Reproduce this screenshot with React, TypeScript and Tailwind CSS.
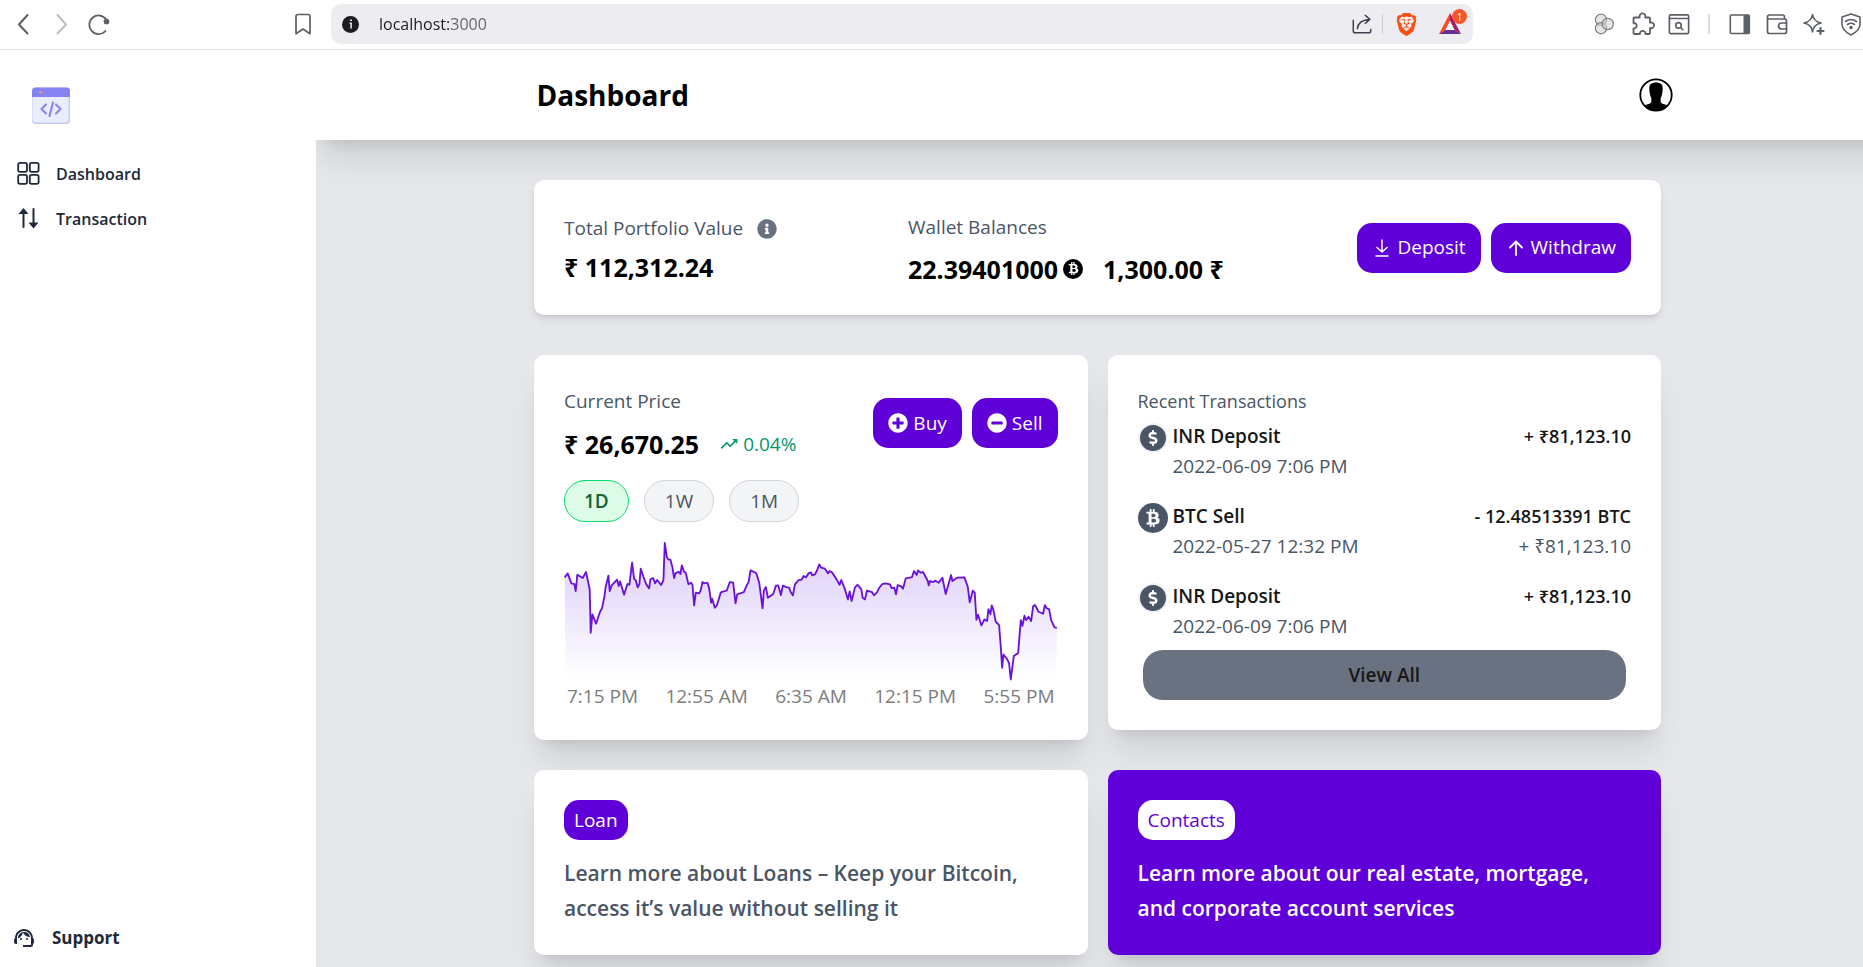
import React, { type ReactNode } from "react";
import { FaBtc, FaDollarSign, FaInfoCircle, FaMinusCircle, FaPlusCircle } from "react-icons/fa";
import { MdSupportAgent, MdTrendingUp } from "react-icons/md";
import { SiBrave } from "react-icons/si";

const CARD = "rounded-[10px] p-[30px]";
const SHADOW_XL = "shadow-[0_25px_31px_-6px_rgb(0_0_0/0.1),0_10px_12px_-8px_rgb(0_0_0/0.1)]";
const SHADOW_MD = "shadow-[0_5px_8px_-1px_rgb(0_0_0/0.1),0_3px_5px_-3px_rgb(0_0_0/0.1)]";
const PURPLE_BUTTON =
  "flex h-[50px] items-center rounded-[15px] bg-[#5f00d9] px-[15px] text-[19px] text-white";

function Stroke({ size, box = 24, width = 2, children }: { size: string; box?: number; width?: number; children: ReactNode }) {
  return (
    <svg
      className={size}
      viewBox={`0 0 ${box} ${box}`}
      fill="none"
      stroke="currentColor"
      strokeWidth={width}
      strokeLinecap="round"
      strokeLinejoin="round"
      aria-hidden="true"
    >
      {children}
    </svg>
  );
}

function BrowserBar() {
  return (
    <div className="flex h-[50px] shrink-0 items-center border-b border-[#e2e2e4] bg-white pb-px text-[#5b5f66]">
      <div className="flex w-[331px] shrink-0 items-center pl-3">
        <button aria-label="Back" className="mr-[14px]">
          <Stroke size="size-6"><path d="M15.500 3 7 12.500 15.500 21.500" /></Stroke>
        </button>
        <button aria-label="Forward" className="mr-[12px] text-[#bcbec1]">
          <Stroke size="size-6"><path d="M7.500 3 16 12.500 7.500 21.500" /></Stroke>
        </button>
        <button aria-label="Reload" className="mr-auto">
          <Stroke size="size-6" width={1.7}>
            <path d="M19.500 19A9.300 9.300 0 1 1 20.300 7.500" />
            <circle cx="20.500" cy="9.500" r="2" fill="currentColor" />
          </Stroke>
        </button>
        <button aria-label="Bookmark" className="mr-4">
          <Stroke size="size-6" width={1.7}>
            <path d="M5 4.500a2 2 0 0 1 2-2h10a2 2 0 0 1 2 2v17.200l-7-4.700-7 4.700z" />
          </Stroke>
        </button>
      </div>
      <div className="flex h-10 flex-1 items-center rounded-[10px] bg-[#edecf1] pl-[11px] text-[#3b3e4f]">
        <svg className="size-[17px] shrink-0" viewBox="0 0 17 17" aria-hidden="true">
          <circle cx="8.500" cy="8.500" r="8.500" fill="#1b1b20" />
          <path d="M8 4.200h2M7.600 7.200h1.500v5.300" stroke="#edecf1" strokeWidth="1.500" fill="none" />
        </svg>
        <input
          aria-label="Address"
          defaultValue="localhost:3000"
          className="ml-5 min-w-0 flex-1 bg-[linear-gradient(90deg,#1b1b20_73px,#63636b_73px)] bg-clip-text font-['Open_Sans',sans-serif] text-[16px] leading-6 text-transparent caret-black outline-none"
        />
        <button aria-label="Share" className="mr-[9px]">
          <Stroke size="size-[22px]" width={1.6}>
            <path d="M2.500 8v11.500a2 2 0 0 0 2 2h15a2 2 0 0 0 2-2v-1.500M7 17c.5-6 5-9.500 13-10M15.500 2.500 20.500 7l-5 4.500" />
          </Stroke>
        </button>
        <span className="mr-[12px] h-5 w-px bg-[#c9c9d0]" />
        <button aria-label="Brave Shields" className="mr-5 text-[#fb5010]">
          <SiBrave className="size-[23px]" />
        </button>
        <button aria-label="Brave Rewards, 1 new" className="relative mr-[11px]">
          <svg className="size-6" viewBox="0 0 24 24" aria-hidden="true">
            <path d="M12 1 1 22l6.500-4L12 9z" fill="#ff4724" />
            <path d="M12 1v8l4.500 9 6.500 4z" fill="#9e1f63" />
            <path d="M1 22h22l-6.500-4h-9z" fill="#662d91" />
            <path d="m12 9 4.500 9h-9z" fill="#fff" />
          </svg>
          <span className="absolute -top-[3px] left-[14px] flex size-[15px] items-center justify-center rounded-full bg-[#fb542b] text-[10px] leading-none text-white">
            1
          </span>
        </button>
      </div>
      <div className="flex w-[390px] shrink-0 items-center justify-end gap-[13px]">
        <button aria-label="Color circles" className="mr-[3px]">
          <svg className="size-[22px]" viewBox="0 0 22 22" fill="#d4d4d4" fillOpacity="0.6" stroke="#7d8084" strokeWidth="1.200" aria-hidden="true">
            <circle cx="8" cy="6.800" r="5.600" />
            <circle cx="8" cy="15.200" r="5.600" />
            <circle cx="14.800" cy="11" r="5.600" />
          </svg>
        </button>
        <button aria-label="Extensions">
          <Stroke size="size-6" width={1.8}>
            <path d="M3.500 5.500H8.700a3 3 0 1 1 5.600 0H18a1 1 0 0 1 1 1v4.200a2.900 2.900 0 1 1 0 5.300v5a1 1 0 0 1-1 1h-3.500c.2-4.200-5.800-4.200-5.600 0H3.500a1 1 0 0 1-1-1v-4.600c4.300.2 4.300-5.600 0-5.400V6.500a1 1 0 0 1 1-1z" />
          </Stroke>
        </button>
        <button aria-label="Search tabs">
          <Stroke size="size-[22px]" width={1.8}>
            <rect x="1.500" y="2" width="21" height="20.500" rx="1.500" />
            <path d="M1.500 6h21" />
            <circle cx="11.500" cy="13.500" r="3" />
            <path d="m13.800 15.800 2.500 2.500" />
          </Stroke>
        </button>
        <span className="mx-[5px] h-5 w-[2px] bg-[#dcdde2]" />
        <button aria-label="Sidebar">
          <svg className="size-6" viewBox="0 0 24 24" aria-hidden="true">
            <rect x="2.300" y="3" width="19" height="18.500" rx="1" fill="none" stroke="currentColor" strokeWidth="1.600" />
            <path d="M15.500 3h6v18.500h-6z" fill="currentColor" />
          </svg>
        </button>
        <button aria-label="Wallet">
          <Stroke size="size-6" width={1.7}>
            <path d="M19.500 7V5a2 2 0 0 0-2-2H4.500a2 2 0 0 0-2 2v14.500a2 2 0 0 0 2 2h15a2 2 0 0 0 2-2V9a2 2 0 0 0-2-2H2.500" />
            <path d="M21.500 11h-5a3 3 0 0 0 0 6h5" />
          </Stroke>
        </button>
        <button aria-label="Leo AI">
          <Stroke size="size-6" width={1.6}>
            <path d="M10.500 2.500c.6 4.700 3 7.300 8.500 8.500-5.500 1.200-7.900 3.800-8.500 9-.6-5.200-3-7.800-8.500-9 5.500-1.200 7.900-3.800 8.500-8.500z" />
            <path d="M18.500 16v6M15.500 19h6" strokeWidth="2.200" />
          </Stroke>
        </button>
        <button aria-label="VPN">
          <Stroke size="size-6" width={1.6}>
            <path d="M12 2 21 5v7c0 5-4 8.500-9 11-5-2.500-9-6-9-11V5z" />
            <path d="M6.500 9.500c3.500-2.600 7.500-2.600 11 0M8.500 12.500c2.200-1.600 4.800-1.600 7 0" />
            <circle cx="12" cy="15.500" r="1" fill="currentColor" />
          </Stroke>
        </button>
      </div>
    </div>
  );
}

function Logo() {
  return (
    <svg className="h-[38px] w-10" viewBox="0 0 40 38" role="img" aria-label="Code window logo">
      <rect x="1" y="0.500" width="38" height="36.500" rx="3.500" fill="#c9c9f2" />
      <rect x="1.500" y="1" width="36" height="34.500" rx="3" fill="#e9edff" />
      <path d="M1 4a3.500 3.500 0 0 1 3.500-3.500h31A3.500 3.500 0 0 1 39 4v6H1z" fill="#8583f4" />
      <circle cx="6.500" cy="5.500" r="1" fill="#6aa5ff" />
      <circle cx="9.300" cy="5.500" r="1" fill="#f5b56b" />
      <circle cx="12" cy="5.500" r="1" fill="#e66fa8" />
      <path
        d="m15 17.500-4.500 4.500 4.500 4.500M25 17.500l4.500 4.500-4.500 4.500M22 15.500 18.500 29"
        fill="none"
        stroke="#8a86ee"
        strokeWidth="2.200"
        strokeLinecap="round"
        strokeLinejoin="round"
      />
    </svg>
  );
}

function Sidebar() {
  return (
    <aside className="relative z-10 flex w-[316px] shrink-0 flex-col justify-between bg-white pt-[37px] pb-[14px] text-[#1e293b]">
      <div>
        <div className="pl-[31px]"><Logo /></div>
        <nav className="mt-[26px] flex flex-col text-[16px] font-semibold">
          <a href="#dashboard" className="flex h-[45px] items-center gap-4 pl-[17px]">
            <svg className="size-[23px]" viewBox="0 0 23 23" fill="none" stroke="currentColor" strokeWidth="1.800" aria-hidden="true">
              <rect x="1.200" y="0.900" width="8.800" height="9" rx="1.800" />
              <rect x="12.800" y="0.900" width="8.800" height="9" rx="1.800" />
              <rect x="1.200" y="12.900" width="8.800" height="9" rx="1.800" />
              <rect x="12.800" y="12.900" width="8.800" height="9" rx="1.800" />
            </svg>
            Dashboard
          </a>
          <a href="#transaction" className="flex h-[45px] items-center gap-4 pl-[17px]">
            <svg className="size-[23px]" viewBox="0 0 23 23" aria-hidden="true">
              <path d="M6.500 20V5M16.500 2v15" stroke="currentColor" strokeWidth="2" strokeLinecap="round" />
              <path d="M6.500 1 11.500 7h-10zM16.500 21.500l-5-6h10z" fill="currentColor" />
            </svg>
            Transaction
          </a>
        </nav>
      </div>
      <a href="#support" className="flex h-[30px] items-center gap-4 pl-3 text-[17px] font-bold">
        <MdSupportAgent className="size-6" />
        Support
      </a>
    </aside>
  );
}

function Avatar() {
  return (
    <svg className="size-[34px]" viewBox="0 0 34 34" aria-hidden="true">
      <defs>
        <clipPath id="avatar-clip"><circle cx="17" cy="17" r="16" /></clipPath>
      </defs>
      <g clipPath="url(#avatar-clip)">
        <path d="M17 4.500c5 0 6.900 2.400 6.700 6.300-.1 3-.5 6.700-2 9.500v4c.6 1.800 4.800 1.700 8.500 4.200V34H3.800v-5.500c3.700-2.500 7.900-2.400 8.500-4.200v-4c-1.500-2.800-1.900-6.500-2-9.500C10.100 6.900 12 4.500 17 4.500z" />
      </g>
      <circle cx="17" cy="17" r="15.700" fill="none" stroke="#000" strokeWidth="1.800" />
    </svg>
  );
}

function Header() {
  return (
    <header className={`-mr-10 bg-white pr-10 ${SHADOW_XL}`}>
      <div className="mx-auto flex h-[90px] w-full max-w-[1130px] items-center justify-between px-1">
        <h1 className="text-[28px] font-bold text-black">Dashboard</h1>
        <button aria-label="Account" className="-mr-[14px]"><Avatar /></button>
      </div>
    </header>
  );
}

function PortfolioCard() {
  return (
    <section className={`${CARD} ${SHADOW_MD} grid h-[135px] grid-cols-[344px_1fr_auto] items-center bg-white`}>
      <div>
        <div className="flex h-[30px] items-center gap-[14px] text-[19px] font-medium text-gray-600">
          Total Portfolio Value
          <FaInfoCircle className="size-5 text-gray-500" />
        </div>
        <p className="mt-2 text-[25px] leading-[30px] font-bold text-black">₹ 112,312.24</p>
      </div>
      <div>
        <p className="text-[19px] leading-[30px] font-medium text-gray-600">Wallet Balances</p>
        <div className="mt-3 flex items-center text-[25px] leading-[30px] font-bold text-black">
          22.39401000
          <span className="ml-[5px] flex size-5 items-center justify-center rounded-full bg-black text-white">
            <FaBtc className="size-[13px]" />
          </span>
          <span className="ml-5">1,300.00 ₹</span>
        </div>
      </div>
      <div className="flex gap-[10px]">
        <button className={PURPLE_BUTTON}>
          <span className="mr-[5px]">
            <Stroke size="size-5" box={20} width={1.5}><path d="M10 2v12M5 9.500l5 4.500 5-4.500M4 18h12" /></Stroke>
          </span>
          Deposit
        </button>
        <button className={PURPLE_BUTTON}>
          <span className="mr-[5px]">
            <Stroke size="size-5" box={20} width={1.8}><path d="M10 17V4M4 9.500 10 3.500l6 6" /></Stroke>
          </span>
          Withdraw
        </button>
      </div>
    </section>
  );
}

const PRICE_POINTS =
  "74,172 83,160 94,190 103,192 107,213 112,164 128,174 138,156 149,208 152,338 157,283 168,311 180,275 186,264 193,230 197,200 205,167 209,213 215,196 231,179 236,198 240,184 252,224 262,192 268,194 276,128 282,176 287,181 293,202 298,192 302,146 310,170 318,192 327,205 331,178 339,174 345,190 351,180 363,195 370,180 374,69 380,110 384,118 391,119 397,142 402,174 406,160 415,155 421,162 425,136 432,155 437,159 445,193 452,188 457,194 462,256 467,218 477,220 482,210 487,186 492,190 502,188 507,205 513,248 516,236 524,263 530,256 542,217 560,211 569,186 579,188 586,250 591,223 611,216 620,195 625,187 631,151 648,159 657,188 667,265 671,211 677,201 683,233 699,222 707,197 714,196 722,225 728,197 740,202 747,203 751,215 758,226 764,193 775,180 784,179 790,168 797,172 805,160 812,157 816,166 824,163 830,152 837,133 843,143 854,146 863,160 868,153 875,157 889,178 898,194 903,180 913,205 923,238 928,214 934,243 944,202 952,194 963,208 967,233 974,238 980,212 995,216 1001,226 1010,217 1017,203 1026,192 1035,190 1049,193 1054,204 1062,203 1067,223 1072,195 1083,199 1088,206 1096,175 1115,171 1121,153 1129,165 1133,151 1141,158 1148,156 1162,182 1165,196 1169,183 1179,186 1185,182 1195,188 1206,173 1216,222 1232,165 1236,183 1250,173 1272,172 1277,186 1282,200 1288,247 1297,212 1303,218 1308,299 1313,284 1323,316 1332,298 1340,303 1344,267 1350,282 1354,256 1359,270 1366,305 1376,315 1381,380 1385,443 1389,403 1400,417 1406,430 1411,478 1420,408 1433,399 1441,300 1446,317 1452,287 1457,300 1464,290 1472,303 1478,258 1484,255 1494,275 1508,281 1513,255 1518,264 1526,268 1532,300 1542,322 1549,323";

function PriceCard() {
  return (
    <section className={`${CARD} ${SHADOW_XL} bg-white`}>
      <div className="flex justify-between">
        <div>
          <p className="text-[19px] leading-8 font-medium text-gray-600">Current Price</p>
          <div className="mt-3 flex items-center">
            <span className="text-[25px] leading-[30px] font-bold text-black">₹ 26,670.25</span>
            <MdTrendingUp className="ml-5 size-5 text-[#059669]" />
            <span className="ml-1 text-[19px] leading-[30px] text-[#059669]">0.04%</span>
          </div>
        </div>
        <div className="mt-[13px] flex gap-[10px]">
          <button className={PURPLE_BUTTON}><FaPlusCircle className="mr-[5px] size-5" />Buy</button>
          <button className={PURPLE_BUTTON}><FaMinusCircle className="mr-[5px] size-5" />Sell</button>
        </div>
      </div>
      <div className="mt-[21px] flex gap-[15px]">
        <button aria-pressed="true" className="h-[42px] rounded-full border border-[#05df72] bg-[#dcfce7] px-[19px] text-[19px] font-semibold text-[#166534]">1D</button>
        <button aria-pressed="false" className="h-[42px] rounded-full border border-gray-300 bg-gray-100 px-5 text-[19px] font-medium text-gray-600">1W</button>
        <button aria-pressed="false" className="h-[42px] rounded-full border border-gray-300 bg-gray-100 px-5 text-[19px] font-medium text-gray-600">1M</button>
      </div>
      <svg className="mt-[18px] block w-full" viewBox="72 60 1479 426" role="img" aria-label="Price over one day">
        <defs>
          <linearGradient id="price-fill" gradientUnits="userSpaceOnUse" x1="0" y1="60" x2="0" y2="475">
            <stop offset="0" stopColor="#5f00d9" stopOpacity="0.2" />
            <stop offset="0.400" stopColor="#5f1ee6" stopOpacity="0.140" />
            <stop offset="1" stopColor="#5f1ee6" stopOpacity="0" />
          </linearGradient>
        </defs>
        <polygon points={`76,475 ${PRICE_POINTS} 1548,475`} fill="url(#price-fill)" />
        <polyline points={PRICE_POINTS} fill="none" stroke="#6a11dc" strokeWidth="5.500" strokeLinejoin="round" />
      </svg>
      <div className="flex justify-between px-[3px] text-[19px] leading-7 font-medium text-[#7c7c7c]">
        {["7:15 PM", "12:55 AM", "6:35 AM", "12:15 PM", "5:55 PM"].map((time) => (
          <span key={time}>{time}</span>
        ))}
      </div>
    </section>
  );
}

type Transaction = { kind: "inr" | "btc"; title: string; time: string; amount: string; value?: string };

const TRANSACTIONS: Transaction[] = [
  { kind: "inr", title: "INR Deposit", time: "2022-06-09 7:06 PM", amount: "+ ₹81,123.10" },
  { kind: "btc", title: "BTC Sell", time: "2022-05-27 12:32 PM", amount: "- 12.48513391 BTC", value: "+ ₹81,123.10" },
  { kind: "inr", title: "INR Deposit", time: "2022-06-09 7:06 PM", amount: "+ ₹81,123.10" },
];

function TransactionsCard() {
  return (
    <section className={`${CARD} ${SHADOW_XL} bg-white`}>
      <h2 className="text-[18px] leading-8 text-gray-600">Recent Transactions</h2>
      <ul className="mt-1 flex flex-col gap-5">
        {TRANSACTIONS.map((item, index) => (
          <li key={index} className="flex gap-[5px]">
            {item.kind === "inr" ? (
              <span className="mt-[2px] flex size-[30px] shrink-0 items-center justify-center rounded-full border-2 border-gray-100 bg-gray-600 text-white">
                <FaDollarSign className="size-4" />
              </span>
            ) : (
              <span className="mt-[2px] flex size-[30px] shrink-0 items-center justify-center rounded-full bg-gray-600 text-white">
                <FaBtc className="size-[18px]" />
              </span>
            )}
            <div className="flex flex-1 justify-between leading-[30px]">
              <div>
                <p className="text-[19px] font-semibold text-[#171717]">{item.title}</p>
                <p className="text-[19px] text-gray-600">{item.time}</p>
              </div>
              <div className="text-right">
                <p className="text-[18px] font-semibold text-[#171717]">{item.amount}</p>
                {item.value && <p className="text-[19px] text-gray-600">{item.value}</p>}
              </div>
            </div>
          </li>
        ))}
      </ul>
      <div className="mt-[9px] px-[5px]">
        <button className="h-[50px] w-full rounded-[20px] bg-gray-500 text-[19px] font-semibold text-[#171717]">View All</button>
      </div>
    </section>
  );
}

function LoanCard() {
  return (
    <section className={`${CARD} ${SHADOW_XL} h-[185px] bg-white`}>
      <a href="#loan" className="flex h-10 w-fit items-center rounded-[15px] bg-[#5f00d9] px-[10px] text-[19px] text-white">Loan</a>
      <p className="mt-4 text-[21px] leading-[35px] font-semibold text-gray-600">
        Learn more about Loans – Keep your Bitcoin, access it’s value without selling it
      </p>
    </section>
  );
}

function ContactsCard() {
  return (
    <section className={`${CARD} ${SHADOW_XL} h-[185px] bg-[#5f00d9]`}>
      <a href="#contacts" className="flex h-10 w-fit items-center rounded-[15px] bg-white px-[10px] text-[19px] text-[#5f00d9]">Contacts</a>
      <p className="mt-4 text-[21px] leading-[35px] font-semibold text-white">
        Learn more about our real estate, mortgage, and corporate account services
      </p>
    </section>
  );
}

export default function App() {
  return (
    <div className="flex min-h-screen flex-col overflow-x-clip bg-[#e5e7eb] font-['Open_Sans','Noto_Sans',sans-serif]">
      <BrowserBar />
      <div className="-mr-4 flex flex-1">
        <Sidebar />
        <div className="min-w-0 flex-1">
          <Header />
          <main className="pt-10 pb-3">
            <div className="mx-auto flex w-full max-w-[1127px] flex-col">
              <PortfolioCard />
              <div className="mt-10 grid grid-cols-2 items-start gap-x-5 gap-y-[30px]">
                <PriceCard />
                <TransactionsCard />
                <LoanCard />
                <ContactsCard />
              </div>
            </div>
          </main>
        </div>
      </div>
    </div>
  );
}
